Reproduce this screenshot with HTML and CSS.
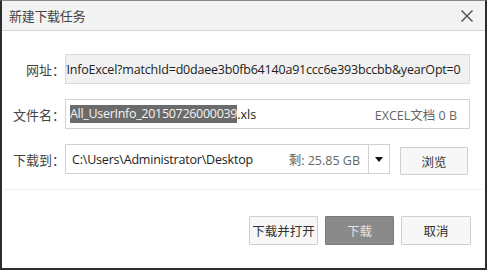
FILE: index.html
```html
<!DOCTYPE html>
<html lang="zh-CN">
<head>
<meta charset="utf-8">
<title>新建下载任务</title>
<link rel="stylesheet" href="styles.css">
</head>
<body>
<div class="win">
  <div class="titlebar">
    <span class="title">新建下载任务</span>
    <svg class="close" width="14" height="14" viewBox="0 0 14 14"><path d="M1.5 1.5 L12.5 12.5 M12.5 1.5 L1.5 12.5" stroke="#555" stroke-width="1.5" fill="none"/></svg>
  </div>
  <div class="content">
    <div class="row">
      <div class="label">网址：</div>
      <div class="field field-url"><span class="url-text">/InfoExcel?matchId=d0daee3b0fb64140a91ccc6e393bccbb&amp;yearOpt=0</span></div>
    </div>
    <div class="row">
      <div class="label">文件名：</div>
      <div class="field field-name"><span class="sel">All_UserInfo_20150726000039</span><span>.xls</span><span class="meta">EXCEL文档 0 B</span></div>
    </div>
    <div class="row">
      <div class="label">下载到：</div>
      <div class="field field-path"><span class="path-text">C:\Users\Administrator\Desktop</span><span class="meta">剩: 25.85 GB</span><div class="dd"><svg width="8" height="5" viewBox="0 0 8 5"><path d="M0 0 H8 L4 5 Z" fill="#111"/></svg></div></div>
      <button class="btn btn-browse">浏览</button>
    </div>
  </div>
  <div class="sep"></div>
  <div class="actions">
    <button class="btn">下载并打开</button>
    <button class="btn btn-primary">下载</button>
    <button class="btn btn-cancel">取消</button>
  </div>
</div>
</body>
</html>
```

FILE: styles.css
```css
* { box-sizing: border-box; }
html, body { margin: 0; padding: 0; background: #fff; }
body { font-family: "Noto Sans CJK SC", "Noto Sans", sans-serif; color: #333; }
.win {
  width: 487px; height: 270px;
  border-left: 2px solid #2c2c2c;
  border-right: 2px solid #2c2c2c;
  border-bottom: 2px solid #2c2c2c;
  border-top: 1px solid #8a8a8a;
  background: #fff;
  display: flex; flex-direction: column;
}
.titlebar {
  height: 30px; flex: none;
  background: #f3f3f3;
  border-bottom: 1px solid #d6d6d6;
  display: flex; align-items: center; justify-content: space-between;
  padding: 0 11px 0 7px;
}
.title { font-size: 13px; color: #444; letter-spacing: -0.3px; }
.close { display: block; }
.content { padding: 23px 15px 0 0; display: flex; flex-direction: column; gap: 15px; }
.row { display: flex; align-items: center; height: 30px; }
.label {
  width: 63px; flex: none; text-align: right;
  font-size: 13px; color: #444;
}
.field {
  flex: 1; height: 30px;
  border: 1px solid #d2d2d2;
  display: flex; align-items: center;
  padding: 0 12px 0 6px;
  font-family: "Open Sans", "Noto Sans", "Noto Sans CJK SC", sans-serif;
  font-size: 12.5px; color: #222;
  white-space: nowrap; overflow: hidden;
}
.field-url { background: #f1f1f1; border-color: #dadada; padding-left: 0; }
.url-text { margin-left: -4px; letter-spacing: -0.2px; }
.field-name { padding-left: 4px; }
.sel { background: #6b6b6b; color: #f4f4f4; line-height: 18px; letter-spacing: -0.3px; }
.meta { margin-left: auto; color: #666; font-family: "Open Sans", "Noto Sans CJK SC", sans-serif; }
.field-path { flex: none; width: 325px; padding-right: 0; }
.path-text { letter-spacing: -0.2px; }
.field-path .meta { margin-right: 8px; }
.dd {
  width: 21px; height: 100%; flex: none;
  border-left: 1px solid #d2d2d2;
  display: flex; align-items: center; justify-content: center;
}
.btn {
  font-family: "Noto Sans CJK SC", sans-serif;
  font-size: 12.5px; color: #333;
  background: #f7f7f7;
  border: 1px solid #cfcfcf;
  border-radius: 1px;
  height: 29px; width: 69px; padding: 0;
}
.btn-browse { margin-left: 10px; height: 28px; margin-top: 4px; width: 68px; }
.sep { height: 1px; background: #efefef; margin: 15px 2px 0 2px; }
.actions {
  display: flex; justify-content: flex-end; gap: 7px;
  padding: 26px 14px 0 0;
}
.btn-primary { background: #8a8a8a; border-color: #7a7a7a; color: #e4e4e4; }
.btn-cancel { width: 70px; }
```
